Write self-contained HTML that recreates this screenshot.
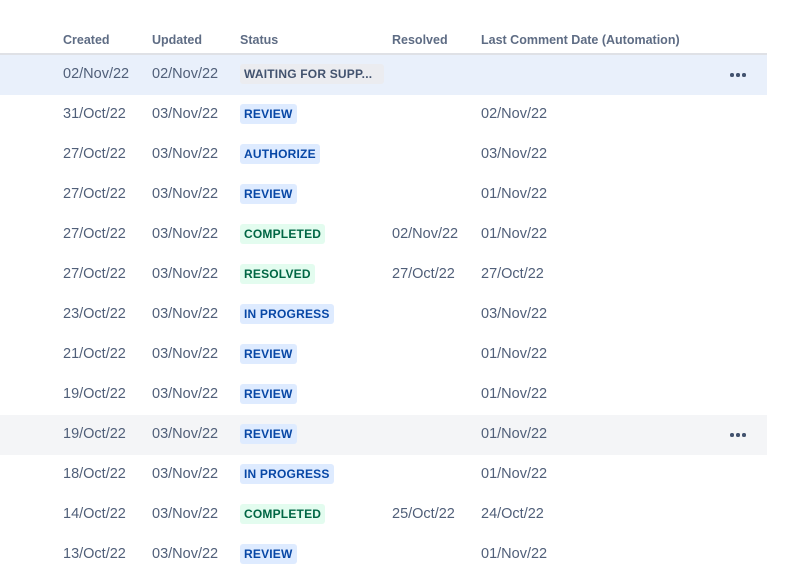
<!DOCTYPE html><html><head><style>
body{margin:0;background:#fff;font-family:"Liberation Sans",sans-serif;width:785px;height:574px;overflow:hidden;position:relative}
.h{position:absolute;top:33px;font-size:12.5px;font-weight:bold;color:#5e6c84}
.line{position:absolute;left:0;top:53px;width:767px;height:2px;background:#dfe1e6}
.row{position:absolute;left:0;width:767px;height:40px}
.c{position:absolute;top:11px;font-size:14.5px;color:#505f79}
.l{position:absolute;top:9px;left:240px;height:20px;line-height:20px;padding:0 4px;border-radius:3px;font-size:12px;font-weight:bold;letter-spacing:.2px}
.b{background:#deebff;color:#0747a6}.g{background:#e3fcef;color:#006644}.n{background:#ebecf0;color:#42526e}
.d{position:absolute;left:730px;top:18px;width:16px;height:4px}
.d i{position:absolute;top:0;width:3.5px;height:3.5px;border-radius:50%;background:#42526e}
</style></head><body>
<div class="h" style="left:63px">Created</div><div class="h" style="left:152px">Updated</div><div class="h" style="left:240px">Status</div><div class="h" style="left:392px">Resolved</div><div class="h" style="left:481px">Last Comment Date (Automation)</div>
<div class="line"></div>
<div class="row" style="top:55px;background:#e9f0fb"><span class="c" style="left:63px">02/Nov/22</span><span class="c" style="left:152px">02/Nov/22</span><span class="l n" style="width:136px">WAITING FOR SUPP...</span><div class="d"><i style="left:0"></i><i style="left:6px"></i><i style="left:12px"></i></div></div>
<div class="row" style="top:95px"><span class="c" style="left:63px">31/Oct/22</span><span class="c" style="left:152px">03/Nov/22</span><span class="l b">REVIEW</span><span class="c" style="left:481px">02/Nov/22</span></div>
<div class="row" style="top:135px"><span class="c" style="left:63px">27/Oct/22</span><span class="c" style="left:152px">03/Nov/22</span><span class="l b">AUTHORIZE</span><span class="c" style="left:481px">03/Nov/22</span></div>
<div class="row" style="top:175px"><span class="c" style="left:63px">27/Oct/22</span><span class="c" style="left:152px">03/Nov/22</span><span class="l b">REVIEW</span><span class="c" style="left:481px">01/Nov/22</span></div>
<div class="row" style="top:215px"><span class="c" style="left:63px">27/Oct/22</span><span class="c" style="left:152px">03/Nov/22</span><span class="l g">COMPLETED</span><span class="c" style="left:392px">02/Nov/22</span><span class="c" style="left:481px">01/Nov/22</span></div>
<div class="row" style="top:255px"><span class="c" style="left:63px">27/Oct/22</span><span class="c" style="left:152px">03/Nov/22</span><span class="l g">RESOLVED</span><span class="c" style="left:392px">27/Oct/22</span><span class="c" style="left:481px">27/Oct/22</span></div>
<div class="row" style="top:295px"><span class="c" style="left:63px">23/Oct/22</span><span class="c" style="left:152px">03/Nov/22</span><span class="l b">IN PROGRESS</span><span class="c" style="left:481px">03/Nov/22</span></div>
<div class="row" style="top:335px"><span class="c" style="left:63px">21/Oct/22</span><span class="c" style="left:152px">03/Nov/22</span><span class="l b">REVIEW</span><span class="c" style="left:481px">01/Nov/22</span></div>
<div class="row" style="top:375px"><span class="c" style="left:63px">19/Oct/22</span><span class="c" style="left:152px">03/Nov/22</span><span class="l b">REVIEW</span><span class="c" style="left:481px">01/Nov/22</span></div>
<div class="row" style="top:415px;background:#f4f5f7"><span class="c" style="left:63px">19/Oct/22</span><span class="c" style="left:152px">03/Nov/22</span><span class="l b">REVIEW</span><span class="c" style="left:481px">01/Nov/22</span><div class="d"><i style="left:0"></i><i style="left:6px"></i><i style="left:12px"></i></div></div>
<div class="row" style="top:455px"><span class="c" style="left:63px">18/Oct/22</span><span class="c" style="left:152px">03/Nov/22</span><span class="l b">IN PROGRESS</span><span class="c" style="left:481px">01/Nov/22</span></div>
<div class="row" style="top:495px"><span class="c" style="left:63px">14/Oct/22</span><span class="c" style="left:152px">03/Nov/22</span><span class="l g">COMPLETED</span><span class="c" style="left:392px">25/Oct/22</span><span class="c" style="left:481px">24/Oct/22</span></div>
<div class="row" style="top:535px"><span class="c" style="left:63px">13/Oct/22</span><span class="c" style="left:152px">03/Nov/22</span><span class="l b">REVIEW</span><span class="c" style="left:481px">01/Nov/22</span></div>
</body></html>
